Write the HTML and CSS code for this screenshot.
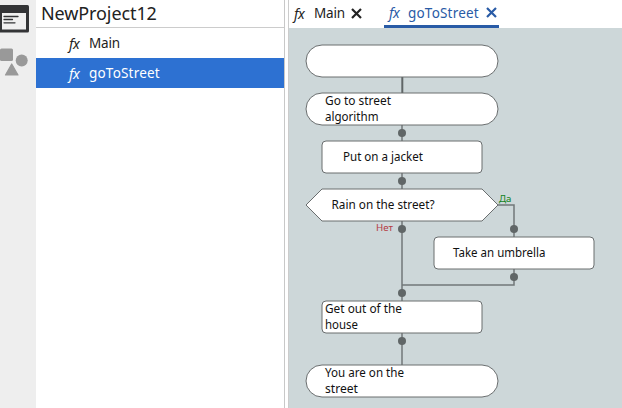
FILE: index.html
```html
<!DOCTYPE html>
<html lang="en">
<head>
<meta charset="utf-8">
<title>NewProject12</title>
<link rel="stylesheet" href="styles.css">
</head>
<body>
<div class="app">
  <nav class="rail">
    <svg class="rail-icons" width="36" height="84" viewBox="0 0 36 84">
      <rect x="-2" y="5" width="31" height="27.500" rx="1.500" fill="#333436"/>
      <rect x="2" y="13" width="24" height="16.500" fill="#f0f0f0"/>
      <path d="M4 16.500H18M4 19.500H12.500M4 22.800H15" stroke="#333436" stroke-width="1.300" stroke-linecap="round"/>
      <g fill="#999">
        <rect x="0" y="48.500" width="13" height="12.500" rx="1.500"/>
        <circle cx="21.700" cy="60.500" r="6"/>
        <path d="M11.700 64L18 75H5.500Z" stroke="#999" stroke-width="1.200" stroke-linejoin="round"/>
      </g>
    </svg>
  </nav>
  <aside class="project">
    <h1 class="project-title"><span class="title-text">NewProject12</span></h1>
    <ul class="functions">
      <li class="function"><i class="fx">fx</i><span class="name">Main</span></li>
      <li class="function selected"><i class="fx">fx</i><span class="name name-long">goToStreet</span></li>
    </ul>
  </aside>
  <main class="editor">
    <div class="tabs">
      <div class="tab"><i class="fx">fx</i><span class="name">Main</span><svg class="close" width="11" height="11" viewBox="0 0 11 11"><path d="M1 1L10 10M10 1L1 10"/></svg></div>
      <div class="tab active"><i class="fx">fx</i><span class="name name-long">goToStreet</span><svg class="close" width="11" height="11" viewBox="0 0 11 11"><path d="M1 1L10 10M10 1L1 10"/></svg></div>
    </div>
    <svg class="canvas" width="333" height="380" viewBox="289 28 333 380">
      <g class="wires">
        <path class="thick" d="M402.300 77V93"/>
        <path d="M402 125V365M498 205H514V285H402"/>
      </g>
      <g class="blocks">
        <rect x="306" y="45" width="192" height="32" rx="16"/>
        <rect x="306" y="93" width="192" height="32" rx="16"/>
        <rect x="322" y="141" width="160" height="32" rx="4"/>
        <path d="M306 205L322 189H482L498 205L482 221H322Z"/>
        <rect x="434" y="237" width="160" height="32" rx="4"/>
        <rect x="322" y="301" width="160" height="32" rx="4"/>
        <rect x="306" y="365" width="192" height="32" rx="16"/>
      </g>
      <g class="joints">
        <circle cx="402" cy="133" r="4"/>
        <circle cx="402" cy="181" r="4"/>
        <circle cx="402" cy="229" r="4"/>
        <circle cx="514" cy="229" r="4"/>
        <circle cx="514" cy="277" r="4"/>
        <circle cx="402" cy="293" r="4"/>
        <circle cx="402" cy="341" r="4"/>
      </g>
      <g class="labels">
        <text x="325" y="105" textLength="66" lengthAdjust="spacingAndGlyphs">Go to street</text>
        <text x="325" y="121" textLength="53.500" lengthAdjust="spacingAndGlyphs">algorithm</text>
        <text x="343" y="161" textLength="80" lengthAdjust="spacingAndGlyphs">Put on a jacket</text>
        <text x="331.500" y="209" textLength="103" lengthAdjust="spacingAndGlyphs">Rain on the street?</text>
        <text x="453" y="257" textLength="92.500" lengthAdjust="spacingAndGlyphs">Take an umbrella</text>
        <text x="325" y="313" textLength="77" lengthAdjust="spacingAndGlyphs">Get out of the</text>
        <text x="325" y="329" textLength="33" lengthAdjust="spacingAndGlyphs">house</text>
        <text x="325" y="377" textLength="79" lengthAdjust="spacingAndGlyphs">You are on the</text>
        <text x="325" y="393" textLength="33" lengthAdjust="spacingAndGlyphs">street</text>
      </g>
      <text class="branch no" x="376" y="231" textLength="17" lengthAdjust="spacingAndGlyphs">Нет</text>
      <text class="branch yes" x="499" y="202" textLength="12.500" lengthAdjust="spacingAndGlyphs">Да</text>
    </svg>
  </main>
</div>
</body>
</html>
```
FILE: styles.css
```css
* { box-sizing: border-box; }
body {
  margin: 0;
  font-family: "Noto Sans", "Open Sans", sans-serif;
  font-size: 13.5px;
  color: #222;
  background: #fff;
}
.app { display: flex; width: 622px; height: 408px; overflow: hidden; }
.rail { width: 36px; background: #eee; }
.rail-icons { display: block; }
.project { width: 249px; border-right: 1px solid #c8c8c8; }
.project-title {
  height: 28px;
  margin: 0;
  padding-left: 5px;
  border-bottom: 1px solid #ccc;
  font-size: 18px;
  line-height: 26px;
  font-weight: 400;
}
.title-text { letter-spacing: -0.1px; }
.functions { margin: 0; padding: 0; list-style: none; }
.function {
  display: flex;
  align-items: center;
  height: 30px;
  padding-left: 33px;
}
.function.selected { background: #2d71d2; color: #fff; }
.fx { width: 20px; font-size: 14px; letter-spacing: -0.5px; }
.name { letter-spacing: -0.2px; }
.name-long { letter-spacing: 0.2px; }
.editor { width: 334px; margin-left: 3px; border-left: 1px solid #ccc; }
.tabs { display: flex; height: 28px; }
.tab {
  display: flex;
  align-items: center;
  width: 95px;
  height: 28px;
  padding: 0 0 2px 5px;
}
.tab.active {
  width: 115px;
  color: #295ba6;
  border-bottom: 3px solid #295ba6;
  padding-bottom: 0;
}
.tab .fx { width: 20px; }
.tab.active .fx { width: 19px; }
.tab .close { margin-left: auto; margin-right: 22px; flex: none; }
.tab.active .close { margin-right: 2px; }
.close path { fill: none; stroke: currentColor; stroke-width: 2.2; }
.canvas { display: block; background: #cdd7d9; }
.wires { fill: none; stroke: #727879; stroke-width: 1.5; }
.wires .thick { stroke: #606667; stroke-width: 2; }
.blocks { fill: #fff; stroke: #6a6e6f; stroke-width: 1; }
.joints { fill: #606667; }
.labels { fill: #111; font-size: 12.5px; }
.branch { font-size: 9px; }
.no { fill: #b43b43; }
.yes { fill: #138323; }
```
